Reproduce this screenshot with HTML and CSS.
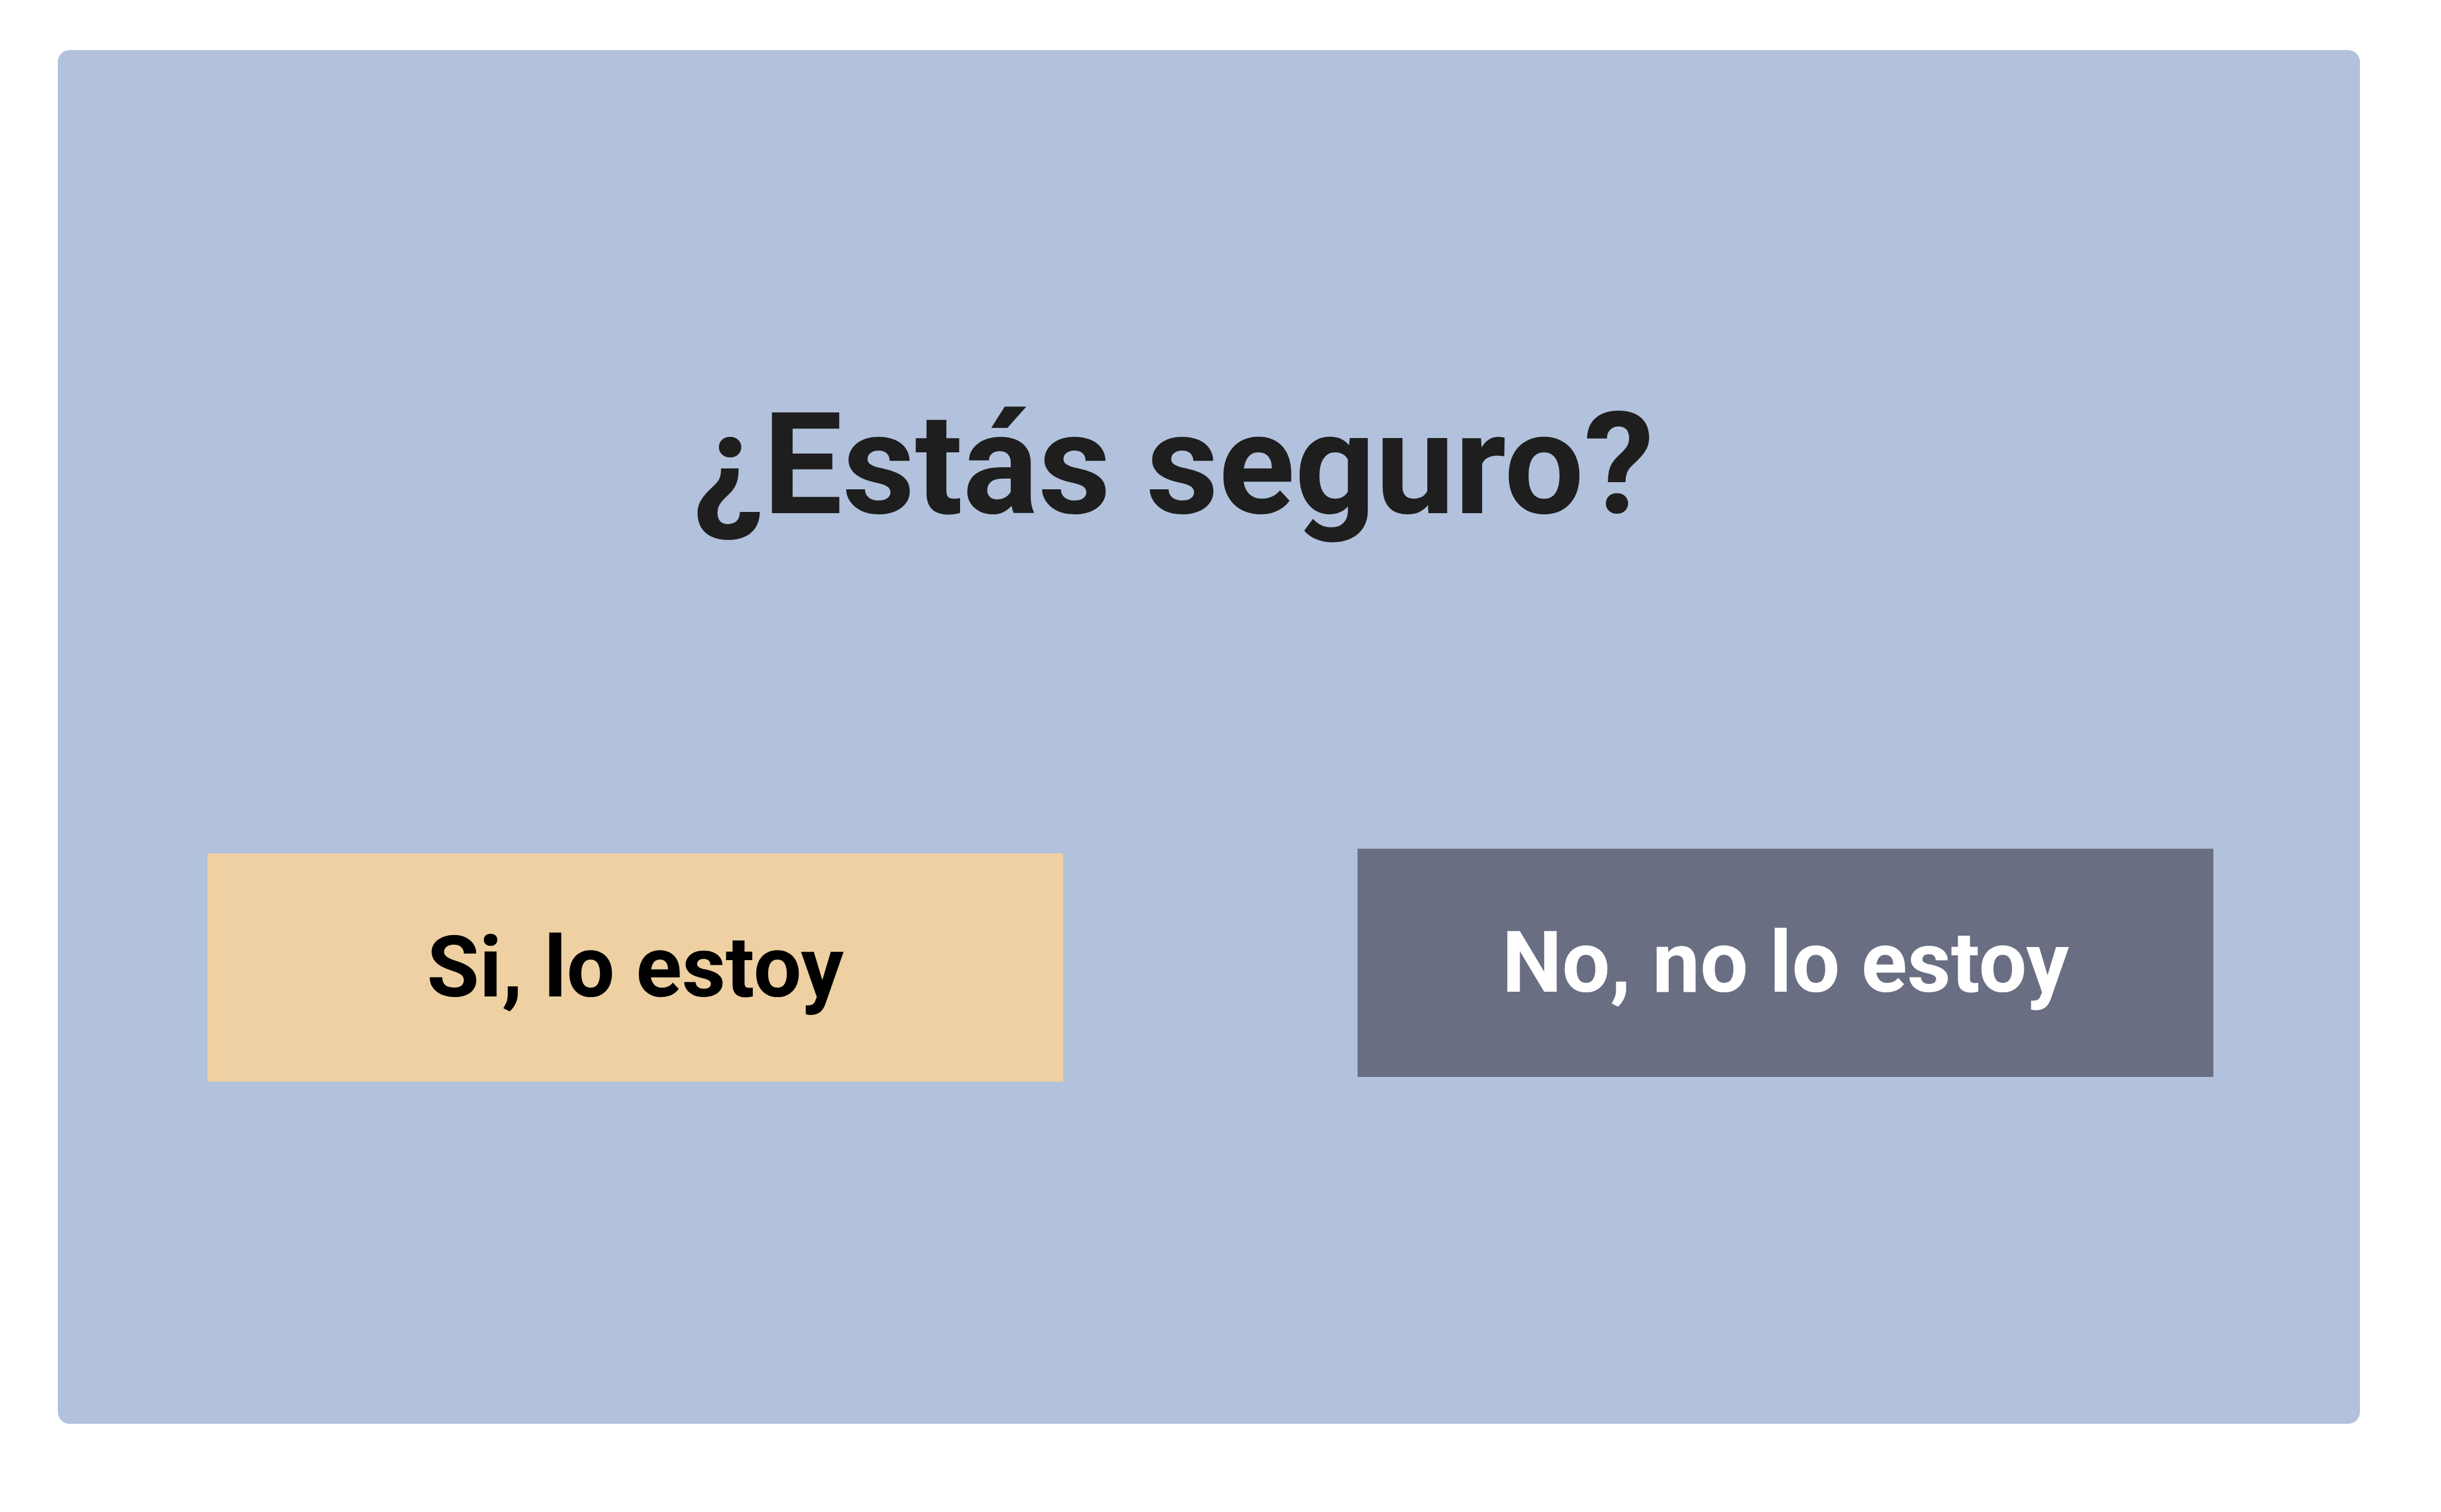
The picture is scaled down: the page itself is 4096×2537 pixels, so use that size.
FILE: index.html
```html
<!DOCTYPE html>
<html lang="es">
<head>
  <meta charset="utf-8">
  <meta name="viewport" content="width=device-width, initial-scale=1">
  <title>¿Estás seguro?</title>
  <link rel="stylesheet" href="styles.css">
</head>
<body>
  <main class="dialog">
    <h1 class="dialog-title">¿Estás seguro?</h1>
    <div class="dialog-actions">
      <button class="button button-confirm" type="button">Si, lo estoy</button>
      <button class="button button-cancel" type="button">No, no lo estoy</button>
    </div>
  </main>
</body>
</html>
```
FILE: styles.css
```css
* {
  box-sizing: border-box;
}

body {
  margin: 0;
  padding: 84px 136px 148px 97px;
  background: #ffffff;
  font-family: Roboto, "Liberation Sans", sans-serif;
  font-weight: 700;
}

.dialog {
  display: flex;
  flex-direction: column;
  gap: 504px;
  padding: 556px 246px 574px 251px;
  border-radius: 20px;
  background: #b2c1dc;
}

.dialog-title {
  margin: 0;
  padding-right: 124px;
  color: #1e1e1e;
  font-size: 237px;
  line-height: 280px;
  text-align: center;
}

.dialog-actions {
  display: grid;
  grid-template-columns: 1fr 1fr;
  column-gap: 494px;
}

.button {
  padding: 107px 0;
  border: 0;
  font: inherit;
  font-size: 143px;
  line-height: 169px;
  cursor: pointer;
}

.button-confirm {
  margin-top: 8px;
  background: #eed0a2;
  color: #000000;
}

.button-cancel {
  margin-bottom: 8px;
  background: #696e82;
  color: #ffffff;
}
```
